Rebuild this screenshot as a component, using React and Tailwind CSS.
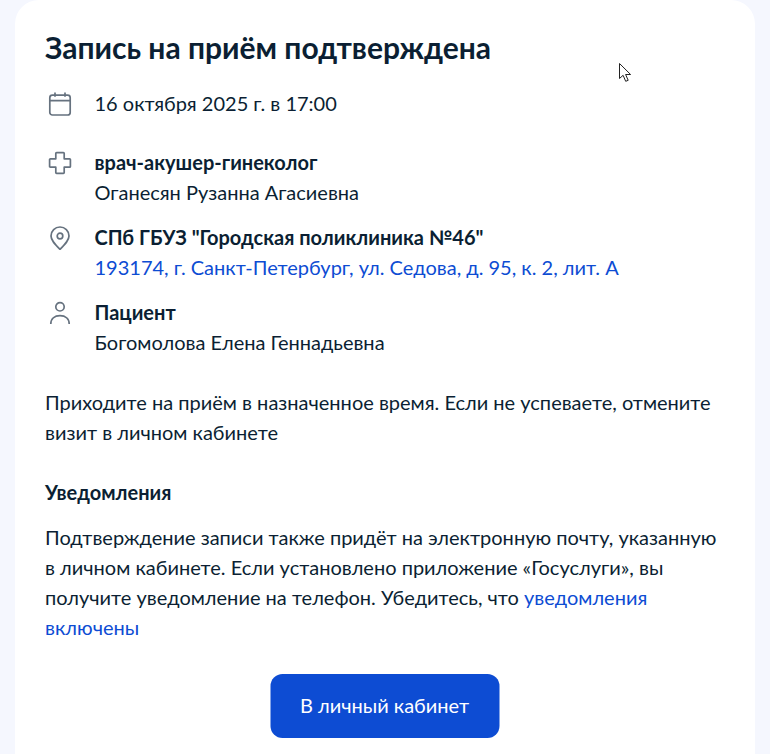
import React from 'react';

function CalendarIcon() {
  return (
    <svg width="24" height="24" viewBox="0 0 24 24" fill="none" stroke="#66727f" strokeWidth="1.7">
      <rect x="1.8" y="3.2" width="20.4" height="19.8" rx="2.6" />
      <path d="M2 8.6h20M7 .4v4.4M17 .4v4.4" />
    </svg>
  );
}

function CrossIcon() {
  return (
    <svg width="24" height="24" viewBox="0 0 24 24" fill="none" stroke="#66727f" strokeWidth="1.7" strokeLinejoin="round">
      <path d="M7.8 2.4a.8.8 0 0 1 .8-.8h6.8a.8.8 0 0 1 .8.8v5.4h5.4a.8.8 0 0 1 .8.8v6.8a.8.8 0 0 1-.8.8h-5.4v5.4a.8.8 0 0 1-.8.8H8.6a.8.8 0 0 1-.8-.8v-5.4H2.4a.8.8 0 0 1-.8-.8V8.6a.8.8 0 0 1 .8-.8h5.4z" />
    </svg>
  );
}

function PinIcon() {
  return (
    <svg width="24" height="24" viewBox="0 0 24 24" fill="none" stroke="#66727f" strokeWidth="1.7">
      <path d="M12 23.4C7 18.4 3 14.4 3 10a9 9 0 0 1 18 0c0 4.4-4 8.4-9 13.4z" strokeLinejoin="round" />
      <circle cx="12" cy="10" r="2.8" />
    </svg>
  );
}

function PersonIcon() {
  return (
    <svg width="24" height="24" viewBox="0 0 24 24" fill="none" stroke="#66727f" strokeWidth="1.7">
      <circle cx="12" cy="5.8" r="4.2" />
      <path d="M2.8 23c0-5.4 3.8-8.4 9.2-8.4s9.2 3 9.2 8.4" />
    </svg>
  );
}

function Cursor() {
  return (
    <svg className="absolute left-[619px] top-[63px]" width="13" height="19" viewBox="0 0 13 19" fill="#fff" stroke="#222" strokeWidth="1">
      <path d="M.5.5v15l3.6-3.2 2.6 6 2.5-1-2.6-5.8h5z" />
    </svg>
  );
}

function Row({ icon, children }) {
  return (
    <div className="flex">
      <div className="w-[49.5px] shrink-0 pl-[3px] pt-[4px]">{icon}</div>
      <div>{children}</div>
    </div>
  );
}

export default function App() {
  return (
    <div className="relative h-[754px] overflow-hidden bg-[#f5f7fe] text-[#0b1f33] font-['Lato','Liberation_Sans',sans-serif] text-[20px] leading-[30px]">
      <div className="mx-[15px] h-[800px] rounded-t-[24px] bg-white pl-[30px] pr-[30px] pt-[27px]">
        <h1 className="text-[30px] leading-[40px] font-bold">Запись на приём подтверждена</h1>

        <div className="mt-[21px]">
          <Row icon={<CalendarIcon />}>16 октября 2025 г. в 17:00</Row>
        </div>

        <div className="mt-[29px]">
          <Row icon={<CrossIcon />}>
            <div className="font-bold">врач-акушер-гинеколог</div>
            <div>Оганесян Рузанна Агасиевна</div>
          </Row>
        </div>

        <div className="mt-[15px]">
          <Row icon={<PinIcon />}>
            <div className="font-bold">СПб ГБУЗ "Городская поликлиника №46"</div>
            <div className="text-[#0d4cd3]">193174, г. Санкт-Петербург, ул. Седова, д. 95, к. 2, лит. А</div>
          </Row>
        </div>

        <div className="mt-[15px]">
          <Row icon={<PersonIcon />}>
            <div className="font-bold">Пациент</div>
            <div>Богомолова Елена Геннадьевна</div>
          </Row>
        </div>

        <p className="mt-[30px]">Приходите на приём в назначенное время. Если не успеваете, отмените визит в личном кабинете</p>

        <h2 className="mt-[30px] font-bold">Уведомления</h2>

        <p className="mt-[15px]">
          Подтверждение записи также придёт на электронную почту, указанную в личном кабинете. Если установлено приложение «Госуслуги», вы получите уведомление на телефон. Убедитесь, что <a className="text-[#0d4cd3]">уведомления включены</a>
        </p>

        <div className="mt-[32px] flex justify-center">
          <button className="h-[64px] w-[229px] -translate-x-[0.5px] rounded-[12px] bg-[#0d4cd3] pb-[2px] text-white">В личный кабинет</button>
        </div>
      </div>
      <Cursor />
    </div>
  );
}
